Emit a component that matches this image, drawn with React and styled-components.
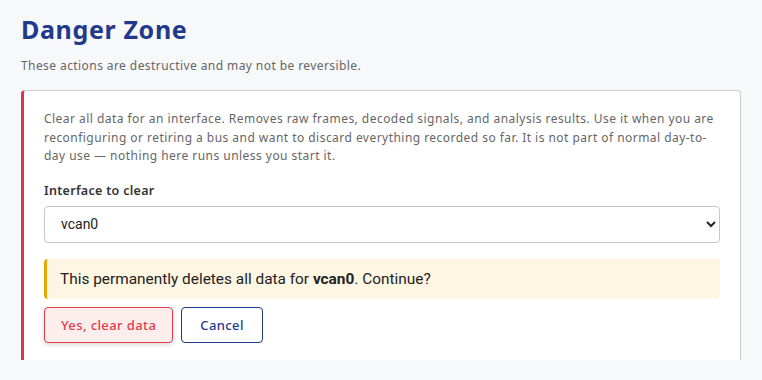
import React from 'react';
import styled, { createGlobalStyle } from 'styled-components';

const GlobalStyle = createGlobalStyle`
  html, body {
    margin: 0;
    padding: 0;
    background: #f7f8fa;
  }
`;

const Page = styled.div`
  height: 360px;
  overflow: hidden;
  padding: 13px 21px 0;
  box-sizing: border-box;
  font-family: "Noto Sans", "Open Sans", sans-serif;
`;

const Title = styled.h1`
  margin: 0;
  font-size: 25px;
  line-height: 32px;
  font-weight: 700;
  color: #1f3a8a;
  letter-spacing: 0.65px;
`;

const Subtitle = styled.p`
  margin: 12px 0 0;
  font-size: 12px;
  line-height: 18px;
  color: #666;
  letter-spacing: 0.42px;
`;

const Card = styled.section`
  margin-top: 15px;
  height: 280px;
  box-sizing: border-box;
  background: #fff;
  border: 1px solid #ccc;
  border-left: 3px solid #dc3545;
  border-radius: 4px;
  padding: 19px 20px;
  display: flex;
  flex-direction: column;
`;

const Description = styled.p`
  margin: 0;
  font-size: 12px;
  line-height: 18.5px;
  color: #666;
  letter-spacing: 0.46px;
`;

const Label = styled.label`
  margin-top: 16px;
  font-size: 12.5px;
  line-height: 18px;
  font-weight: 600;
  color: #333;
  letter-spacing: 0.3px;
`;

const Select = styled.select`
  margin-top: 6px;
  height: 37px;
  padding: 0 8px 0 12px;
  border: 1px solid #c8c8c8;
  border-radius: 4px;
  background: #fff;
  font-family: Roboto, sans-serif;
  font-size: 14px;
  color: #222;
`;

const Alert = styled.div`
  margin-top: 16px;
  height: 40px;
  box-sizing: border-box;
  display: flex;
  align-items: center;
  padding: 0 13px;
  background: #fdf6e3;
  border-left: 3px solid #e6a800;
  border-radius: 4px;
  font-family: Roboto, sans-serif;
  font-size: 15.4px;
  color: #222;

  strong {
    font-weight: 700;
  }
`;

const Actions = styled.div`
  margin-top: 8px;
  display: flex;
  gap: 8px;
`;

const Button = styled.button`
  height: 36px;
  padding: 0 ${p => p.$pad}px;
  border-radius: 4px;
  font-family: "Noto Sans", "Open Sans", sans-serif;
  font-size: 13px;
  font-weight: 500;
  letter-spacing: 0.4px;
  cursor: pointer;
  border: 1px solid ${p => (p.$danger ? '#e23b4a' : '#1f3a8a')};
  color: ${p => (p.$danger ? '#e23b4a' : '#1f3a8a')};
  background: ${p => (p.$danger ? '#fdeeee' : '#fff')};
  box-shadow: ${p => (p.$danger ? '0 2px 5px rgba(0, 0, 0, 0.15)' : 'none')};
`;

export default function App() {
  return (
    <>
      <GlobalStyle />
      <Page>
        <Title>Danger Zone</Title>
        <Subtitle>These actions are destructive and may not be reversible.</Subtitle>
        <Card>
          <Description>
            Clear all data for an interface. Removes raw frames, decoded signals, and analysis
            results. Use it when you are reconfiguring or retiring a bus and want to discard
            everything recorded so far. It is not part of normal day-to-day use — nothing here
            runs unless you start it.
          </Description>
          <Label htmlFor="iface">Interface to clear</Label>
          <Select id="iface" defaultValue="vcan0">
            <option value="vcan0">vcan0</option>
            <option value="vcan1">vcan1</option>
          </Select>
          <Alert>
            <span>
              This permanently deletes all data for <strong>vcan0</strong>. Continue?
            </span>
          </Alert>
          <Actions>
            <Button $danger $pad={16}>Yes, clear data</Button>
            <Button $pad={18}>Cancel</Button>
          </Actions>
        </Card>
      </Page>
    </>
  );
}
